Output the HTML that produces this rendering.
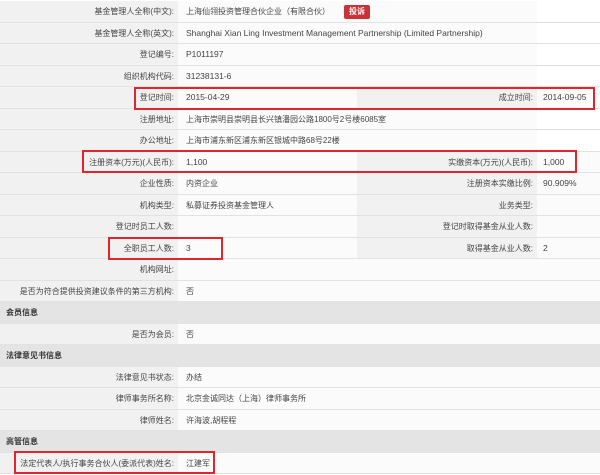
<!DOCTYPE html>
<html><head><meta charset="utf-8"><style>
*{margin:0;padding:0;box-sizing:border-box}
body{width:600px;height:475px;overflow:hidden;background:#fff;font-family:"Liberation Sans","Noto Sans CJK SC",sans-serif;font-size:8px;color:#444;position:relative}
.r{position:absolute;left:0;width:600px;height:21.5px;border-bottom:1px solid #e2e2e2}
.c{position:absolute;top:0;height:100%;line-height:21px;white-space:nowrap}
.l{left:0;width:178px;background:#f1f1f1;text-align:right;padding-right:4px}
.v{left:178px;width:359px;background:#fbfbfb;padding-left:8px}
.v2{left:178px;width:179px;background:#fbfbfb;padding-left:8px}
.l2{left:357px;width:180px;background:#f1f1f1;text-align:right;padding-right:4px}
.v3{left:537px;width:63px;background:#fbfbfb;padding-left:6px}
.e{left:537px;width:63px;background:#fff}
.s{background:#e4e4e4;font-weight:bold;line-height:21px;padding-left:6px;color:#333}
.box{position:absolute;border:2px solid #e0262a}
.btn{display:inline-block;background:#c8333a;color:#fff;border-radius:2px;padding:0 5px;line-height:14px;margin-left:14px;font-weight:bold}
.en{font-size:8.5px}
</style></head><body>
<div class="r" style="top:1px"><div class="c l">基金管理人全称(中文):</div><div class="c v">上海仙翎投资管理合伙企业（有限合伙）<span class="btn">投诉</span></div><div class="c e"></div></div>
<div class="r" style="top:22.5px"><div class="c l">基金管理人全称(英文):</div><div class="c v en">Shanghai Xian Ling Investment Management Partnership (Limited Partnership)</div><div class="c e"></div></div>
<div class="r" style="top:44px"><div class="c l">登记编号:</div><div class="c v en">P1011197</div><div class="c e"></div></div>
<div class="r" style="top:65.5px"><div class="c l">组织机构代码:</div><div class="c v en">31238131-6</div><div class="c e"></div></div>
<div class="r" style="top:87px"><div class="c l">登记时间:</div><div class="c v2 en">2015-04-29</div><div class="c l2">成立时间:</div><div class="c v3 en">2014-09-05</div></div>
<div class="r" style="top:108.5px"><div class="c l">注册地址:</div><div class="c v">上海市崇明县崇明县长兴镇潘园公路1800号2号楼6085室</div><div class="c e"></div></div>
<div class="r" style="top:130px"><div class="c l">办公地址:</div><div class="c v">上海市浦东新区浦东新区银城中路68号22楼</div><div class="c e"></div></div>
<div class="r" style="top:151.5px"><div class="c l">注册资本(万元)(人民币):</div><div class="c v2 en">1,100</div><div class="c l2">实缴资本(万元)(人民币):</div><div class="c v3 en">1,000</div></div>
<div class="r" style="top:173px"><div class="c l">企业性质:</div><div class="c v2">内资企业</div><div class="c l2">注册资本实缴比例:</div><div class="c v3 en">90.909%</div></div>
<div class="r" style="top:194.5px"><div class="c l">机构类型:</div><div class="c v2">私募证券投资基金管理人</div><div class="c l2">业务类型:</div><div class="c v3"></div></div>
<div class="r" style="top:216px"><div class="c l">登记时员工人数:</div><div class="c v2"></div><div class="c l2">登记时取得基金从业人数:</div><div class="c v3"></div></div>
<div class="r" style="top:237.5px"><div class="c l">全职员工人数:</div><div class="c v2 en">3</div><div class="c l2">取得基金从业人数:</div><div class="c v3 en">2</div></div>
<div class="r" style="top:259px"><div class="c l">机构网址:</div><div class="c v" style="width:422px"></div></div>
<div class="r" style="top:280.5px"><div class="c l">是否为符合提供投资建议条件的第三方机构:</div><div class="c v" style="width:422px">否</div></div>
<div class="r s" style="top:302px">会员信息</div>
<div class="r" style="top:323.5px"><div class="c l">是否为会员:</div><div class="c v" style="width:422px">否</div></div>
<div class="r s" style="top:345px">法律意见书信息</div>
<div class="r" style="top:366.5px"><div class="c l">法律意见书状态:</div><div class="c v" style="width:422px">办结</div></div>
<div class="r" style="top:388px"><div class="c l">律师事务所名称:</div><div class="c v" style="width:422px">北京金诚同达（上海）律师事务所</div></div>
<div class="r" style="top:409.5px"><div class="c l">律师姓名:</div><div class="c v" style="width:422px">许海波,胡程程</div></div>
<div class="r s" style="top:431px">高管信息</div>
<div class="r" style="top:452.5px"><div class="c l">法定代表人/执行事务合伙人(委派代表)姓名:</div><div class="c v" style="width:422px">江建军</div></div>
<div class="box" style="left:134px;top:87px;width:461px;height:23px"></div>
<div class="box" style="left:82px;top:150px;width:495px;height:23px"></div>
<div class="box" style="left:108px;top:237px;width:115px;height:23px"></div>
<div class="box" style="left:14px;top:451px;width:201px;height:23px"></div>
</body></html>
